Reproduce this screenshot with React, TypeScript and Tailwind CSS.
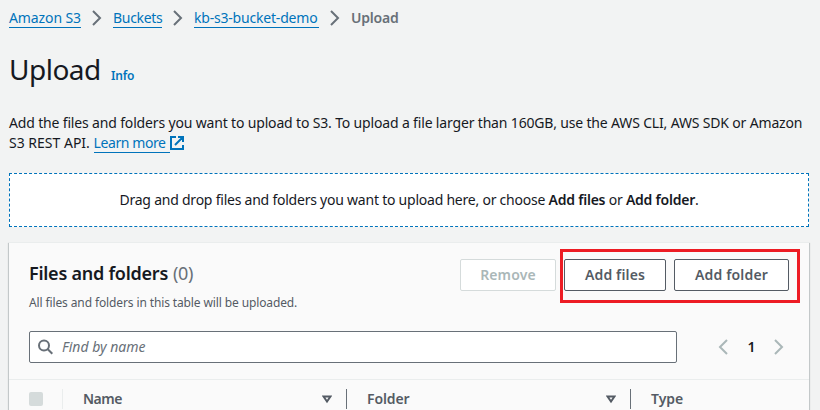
import type { ReactNode } from "react";

function Chevron({ className = "", left = false }: { className?: string; left?: boolean }) {
  return (
    <svg viewBox="0 0 16 16" className={`size-4 shrink-0 fill-none stroke-current ${className}`} strokeWidth="2">
      <path d={left ? "M11 1 L4 8 L11 15" : "M4 1 L11 8 L4 15"} />
    </svg>
  );
}

function Crumb({ children, className }: { children: ReactNode; className: string }) {
  return (
    <a className={`h-[19px] whitespace-nowrap border-b border-[#0073bb] leading-[18px] text-[#0073bb] ${className}`}>{children}</a>
  );
}

function Button({ children, className }: { children: ReactNode; className: string }) {
  return (
    <button className={`flex h-8 items-center justify-center whitespace-nowrap rounded-[2px] border bg-white text-sm font-semibold tracking-[0.15px] ${className}`}>
      {children}
    </button>
  );
}

function SortIcon() {
  return (
    <svg viewBox="0 0 10 9" className="h-[9px] w-[10px] fill-none stroke-[#545b64]" strokeWidth="2">
      <path d="M1.5 1.5 H8.5 L5 6.5 Z" />
    </svg>
  );
}

export default function App() {
  return (
    <div className="h-[410px] w-[820px] overflow-hidden bg-[#f2f3f3] pl-[9px] font-['Noto_Sans','Open_Sans',sans-serif] text-sm text-[#16191f]">
      <nav className="flex h-7 items-start pt-[9px]">
        <Crumb className="w-[72px] tracking-[-0.1px]">Amazon S3</Crumb>
        <Chevron className="ml-2 mr-2 mt-px text-[#687078]" />
        <Crumb className="w-[49px] tracking-[-0.3px]">Buckets</Crumb>
        <Chevron className="ml-2 mr-2 mt-px text-[#687078]" />
        <Crumb className="w-[125px] tracking-[-0.2px]">kb-s3-bucket-demo</Crumb>
        <Chevron className="ml-2 mr-2 mt-px text-[#687078]" />
        <span className="font-semibold leading-[18px] tracking-[-0.2px] text-[#687078]">Upload</span>
      </nav>

      <header className="flex h-[85px] items-baseline pt-[23px]">
        <h1 className="w-[102px] text-[28px] leading-9 tracking-[-0.5px]">Upload</h1>
        <a className="text-xs font-semibold tracking-[-0.2px] text-[#0073bb]">Info</a>
      </header>

      <div className="h-[60px] leading-5">
        <p className="whitespace-nowrap tracking-[-0.162px]">
          Add the files and folders you want to upload to S3. To upload a file larger than 160GB, use the AWS CLI, AWS SDK or Amazon
        </p>
        <div className="flex">
          <span className="w-[84.5px] whitespace-nowrap tracking-[0px]">S3 REST API.</span>
          <a className="h-[20px] w-[76px] whitespace-nowrap border-b border-[#0073bb] tracking-[-0.4px] text-[#0073bb]">Learn more</a>
          <svg viewBox="0 0 14 14" className="mt-[3px] size-[14px] fill-none stroke-[#0073bb]" strokeWidth="2">
            <path d="M6 1 H1 V13 H13 V9 M8 1 H13 V6 M13 1 L5 9" />
          </svg>
        </div>
      </div>

      <section className="flex h-[54px] w-[800px] items-center justify-center border border-dashed border-[#0073bb] bg-white">
        <p className="whitespace-nowrap tracking-[-0.23px]">
          Drag and drop files and folders you want to upload here, or choose <b className="font-semibold">Add files</b> or <b className="font-semibold">Add folder</b>.
        </p>
      </section>

      <section className="mt-[15px] h-[200px] w-[800px] border-t border-[#eaeded] bg-[#fafafa] shadow-[0_1px_1px_0_rgba(0,28,36,0.3),1px_1px_1px_0_rgba(0,28,36,0.15),-1px_1px_1px_0_rgba(0,28,36,0.15)]">
        <div className="relative flex h-[88px] justify-between pl-5 pr-5 pt-4">
          <div>
            <h2 className="flex h-7 items-center whitespace-nowrap text-lg">
              <span className="w-[144px] font-semibold tracking-[-0.25px]">Files and folders</span>
              <span className="tracking-[-0.3px] text-[#687078]">(0)</span>
            </h2>
            <p className="mt-1.5 whitespace-nowrap text-xs leading-5 tracking-[-0.12px] text-[#545b64]">All files and folders in this table will be uploaded.</p>
          </div>
          <div className="flex gap-2">
            <Button className="w-24 border-[#d5dbdb] text-[#aab7b8]">Remove</Button>
            <Button className="w-[102px] border-[#545b64] text-[#545b64]">Add files</Button>
            <Button className="w-[115px] border-[#545b64] text-[#545b64]">Add folder</Button>
          </div>
          <div className="absolute left-[551px] top-[6px] h-[54px] w-[240px] border-[3px] border-[#ed1c24]" />
        </div>

        <div className="flex h-[48px] items-start pl-5 pr-[22px]">
          <div className="flex h-8 w-[648px] items-center rounded-[2px] border border-[#687078] bg-white pl-2">
            <svg viewBox="0 0 16 16" className="size-4 fill-none stroke-[#687078]" strokeWidth="2">
              <circle cx="6" cy="6.5" r="5" />
              <path d="M9.5 10 L14.3 14.8" />
            </svg>
            <span className="ml-2 italic tracking-[0px] text-[#687078]">Find by name</span>
          </div>
          <div className="ml-auto flex h-8 w-[71px] items-center justify-between">
            <Chevron left className="text-[#aab7b8]" />
            <span className="font-semibold">1</span>
            <Chevron className="text-[#aab7b8]" />
          </div>
        </div>

        <div className="flex h-[60px] border-t border-[#eaeded] pl-5 pt-[9px] font-semibold text-[#545b64]">
          <div className="h-5 w-[34px] border-r border-[#eaeded] pt-[3px]">
            <div className="size-[14px] rounded-[2px] bg-[#d5dbdb]" />
          </div>
          <div className="flex h-5 w-[284px] items-center justify-between border-r border-[#687078] pl-5 pr-[14px]">
            <span className="tracking-[-0.5px]">Name</span>
            <SortIcon />
          </div>
          <div className="flex h-5 w-[284px] items-center justify-between border-r border-[#687078] pl-5 pr-[14px]">
            <span className="tracking-[-0.1px]">Folder</span>
            <SortIcon />
          </div>
          <span className="pl-5 leading-5">Type</span>
        </div>
      </section>
    </div>
  );
}
